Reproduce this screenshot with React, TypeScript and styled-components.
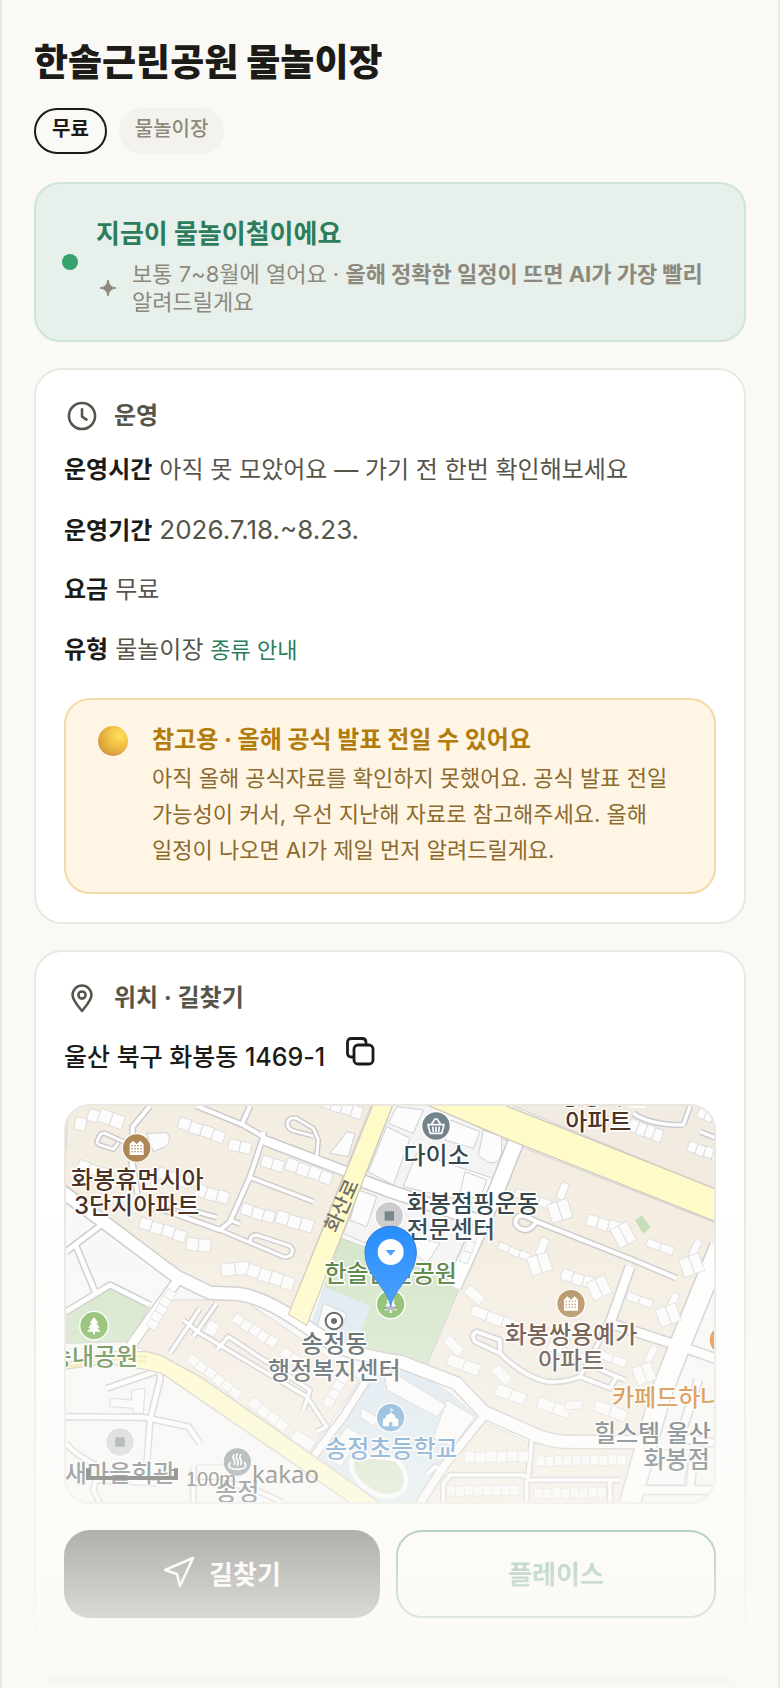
import React from 'react';
import styled, { createGlobalStyle } from 'styled-components';

const GlobalStyle = createGlobalStyle`
  *, *::before, *::after { box-sizing: border-box; }
  body {
    margin: 0;
    background: #faf9f5;
    color: #1c1b17;
    font-family: Inter, "Noto Sans CJK KR", sans-serif;
    word-break: keep-all;
  }
  h1, h2, p, dl, dd { margin: 0; }
`;

const Screen = styled.main`
  position: relative;
  max-height: 100vh;
  overflow: hidden;
  padding: 38px 32px 0;
  border: solid #e9e8e1;
  border-width: 0 2px;
  background: #faf9f5;
`;

const PageTitle = styled.h1`
  font-size: 37px;
  line-height: 50px;
  font-weight: 800;
`;

const Chips = styled.div`
  display: flex;
  gap: 12px;
  margin: 20px 0 28px;
`;

const Chip = styled.span<{ $outlined?: boolean }>`
  height: 46px;
  padding: 0 ${(p) => (p.$outlined ? 16 : 14)}px;
  border: 2px solid ${(p) => (p.$outlined ? '#1c1b17' : '#f3f2ed')};
  border-radius: 23px;
  background: ${(p) => (p.$outlined ? 'transparent' : '#f3f2ed')};
  color: ${(p) => (p.$outlined ? '#1c1b17' : '#8d897c')};
  font-size: 20px;
  line-height: 38px;
  font-weight: ${(p) => (p.$outlined ? 700 : 500)};
`;

const SeasonBanner = styled.section`
  display: flex;
  align-items: center;
  gap: 18px;
  padding: 24px 24px 24px 26px;
  border: 2px solid #cfe5d8;
  border-radius: 26px;
  background: #e7f0eb;
`;

const StatusDot = styled.span`
  flex: none;
  width: 16px;
  height: 16px;
  border-radius: 50%;
  background: #35a26d;
`;

const BannerTitle = styled.h2`
  padding-top: 8px;
  font-size: 26px;
  line-height: 36px;
  font-weight: 700;
  color: #2c7d5b;
`;

const BannerNote = styled.div`
  display: flex;
  align-items: center;
  gap: 12px;
  margin-top: 8px;
  color: #8d897c;
  font-size: 22px;
  line-height: 28px;

  svg { flex: none; }
`;

const Card = styled.section`
  margin-top: 26px;
  padding: 28px;
  border: 2px solid #e9e8e1;
  border-radius: 28px;
  background: #fff;
`;

const CardHeading = styled.h2`
  display: flex;
  align-items: center;
  gap: 14px;
  height: 36px;
  color: #57544a;
  font-size: 24px;
  line-height: 36px;
  font-weight: 700;
`;

const Facts = styled.dl`
  margin: 6px 0 18px;
  font-size: 24px;
  line-height: 60px;
`;

const Fact = styled.div`
  display: flex;
  align-items: baseline;
  gap: 7px;
  height: 60px;

  dt { font-weight: 700; }
  dd { color: #57544a; }
`;

const Digits = styled.span`
  font-size: 26px;
`;

const KindLink = styled.a`
  color: #2c7d5b;
  font-size: 22px;
  text-decoration: none;
`;

const Notice = styled.aside`
  display: flex;
  gap: 24px;
  padding: 24px 24px 24px 32px;
  border: 2px solid #f0dba6;
  border-radius: 26px;
  background: #fff5e5;
  color: #8b6a2d;
  font-size: 22px;
  line-height: 36px;

  h2 {
    margin-bottom: 4px;
    color: #b27c0c;
    font-size: 24px;
    line-height: 32px;
    font-weight: 700;
  }
`;

const Orb = styled.span`
  flex: none;
  width: 30px;
  height: 30px;
  margin-top: 2px;
  border-radius: 50%;
  background:
    radial-gradient(circle at 50% -30%, transparent 84%, #d8796a 100%),
    radial-gradient(circle at 70% 32%, #ffe15c 0, #f3c247 35%, #d9a23c 70%, #cf9a58 100%);
`;

const Address = styled.div`
  display: flex;
  align-items: center;
  gap: 12px;
  height: 88px;
  padding-bottom: 10px;
  font-size: 25px;
  font-weight: 500;
`;

const CopyButton = styled.button`
  display: flex;
  padding: 0 8px 8px;
  border: 0;
  background: none;
  color: #1c1b17;
`;

const MapFrame = styled.div`
  overflow: hidden;
  border: 2px solid #e9e7e0;
  border-radius: 26px;

  svg { display: block; width: 100%; height: 396px; }
`;

const Actions = styled.div`
  display: flex;
  gap: 16px;
  margin-top: 26px;
`;

const ActionButton = styled.button<{ $primary?: boolean }>`
  flex: 1;
  display: flex;
  align-items: center;
  justify-content: center;
  gap: 14px;
  height: 88px;
  padding: 0 0 4px;
  border: ${(p) => (p.$primary ? '0' : '2px solid #2c7d5b')};
  border-radius: 26px;
  background: ${(p) => (p.$primary ? '#1c1b17' : '#fff')};
  color: ${(p) => (p.$primary ? '#fff' : '#2c7d5b')};
  font-family: inherit;
  font-size: 26px;
  font-weight: 700;
`;

const NextCard = styled.div`
  height: 80px;
  margin-top: 28px;
  border-radius: 28px;
  background: #1c1b17;
`;

const BottomFade = styled.div`
  position: absolute;
  left: 0;
  right: 0;
  bottom: 0;
  height: 480px;
  background: linear-gradient(rgba(250, 249, 245, 0), rgba(250, 249, 245, 1));
  pointer-events: none;
`;

/* ---------- map drawing ---------- */

type RoadDef = [d: string, width: number];

const ROADS: RoadDef[] = [
  // trunk road from the west to the east edge
  ['M30 300L160 395L380 560L480 608L565 612Q640 622 740 690L860 770Q960 805 1050 815L1220 880L1300 965L1450 1032Q1490 1050 1540 1055L1800 1057', 36],
  ['M1400 150L1340 300L1210 590', 44],
  ['M640 150L890 245', 26],
  ['M930 270L1010 300L1310 400', 34],
  ['M2010 470L1900 740L1830 920L1740 1240', 60],
  ['M1740 530L1680 700L1880 765L2010 810', 26],
  ['M1300 980L1180 1130L1110 1240', 22],
  ['M950 870L880 980L790 1100', 20],
  ['M380 575L290 700L240 770', 26],
  ['M1860 1040L2000 1060M1770 1200L2000 1200M1930 1100L1920 1200M1945 870L1900 1010', 22],
  // minor streets
  ['M245 250L248 110L300 48M245 200L262 310', 12],
  ['M440 48L580 105L640 140M600 48L575 105M640 140L600 260L540 395L510 420L330 355M640 125V150', 12],
  ['M600 262L790 335M350 340L500 382M540 390L570 402', 10],
  ['M230 160L165 130Q150 128 145 145Q135 160 150 165L190 178L205 158', 8],
  ['M800 200L805 150L790 115L740 85Q715 80 712 100Q712 120 740 125L790 138', 8],
  ['M510 420L700 500Q725 505 728 480L720 468L620 435Q600 435 600 455', 9],
  ['M160 400L48 485M75 460L135 605M48 665L180 585L300 645', 14],
  ['M400 690L450 730L770 920L830 1010L800 1025M500 640L430 740M450 655L360 790M500 780L535 740L780 900L760 960', 10],
  ['M170 895L330 840V870L300 990L290 1130M48 980L280 982L415 1010L450 1060', 14],
  ['M48 1060Q80 1100 150 1130L130 1200L150 1240M130 1170L320 1180M430 1130V1240M430 1180Q560 1160 700 1240', 12],
  ['M1460 395L1750 510L1880 565M1460 395Q1435 430 1410 415Q1390 405 1400 385Q1410 370 1440 385Z', 12],
  ['M1590 860Q1540 880 1490 875Q1420 860 1350 790L1275 755Q1260 735 1280 725L1350 750V785M1590 860L1640 770L1680 680M1590 860L1680 895L1700 860L1610 820M1690 855L1725 870', 11],
  ['M1445 1050L1435 1160M1180 1240V1180L1200 1155H1420L1440 1170H1710M1430 1170V1240M1680 1170V1240M1130 1155L1155 1130L1185 1145', 11],
  ['M1750 70Q1800 105 1900 105M1900 105L1920 48M1950 125L2000 145', 10],
];

type RowDef = [x: number, y: number, angle: number, count: number, w: number, h: number];

const BUILDING_ROWS: RowDef[] = [
  [120, 55, 18, 1, 34, 36], [155, 55, 20, 2, 38, 40], [78, 80, 10, 1, 34, 38],
  [392, 80, 19, 4, 36, 34], [540, 146, 12, 2, 34, 34],
  [640, 195, 17, 2, 34, 34], [715, 203, 19, 4, 36, 36],
  [90, 208, 19, 3, 34, 30], [330, 230, 20, 3, 34, 34], [440, 280, 16, 3, 35, 36],
  [580, 338, 17, 3, 34, 34], [685, 360, 17, 3, 38, 38],
  [275, 380, 18, 4, 36, 34], [412, 442, 6, 2, 36, 38],
  [512, 522, -6, 2, 42, 38], [600, 520, 18, 4, 36, 38],
  [820, 15, 17, 4, 32, 36],
  [380, 610, 120, 5, 26, 30], [480, 690, 28, 1, 34, 40],
  [560, 668, 33, 5, 30, 30], [705, 770, 35, 2, 30, 30],
  [425, 790, 37, 6, 32, 28], [610, 920, 37, 4, 34, 30], [740, 1018, 33, 1, 68, 34],
  [900, 860, 120, 4, 28, 30],
  [1745, 85, 20, 4, 26, 38], [1920, 152, 18, 4, 26, 32], [1950, 50, 20, 3, 24, 32],
  [1400, 295, 20, 3, 38, 26], [1535, 275, 20, 1, 24, 52], [1490, 345, -18, 2, 32, 58],
  [1615, 372, 15, 3, 34, 34], [1680, 420, -28, 2, 28, 64],
  [1350, 455, 22, 3, 34, 22], [1475, 440, 22, 1, 26, 54], [1430, 505, -18, 2, 32, 56],
  [1540, 535, 17, 3, 34, 34], [1608, 580, -25, 2, 30, 58],
  [1795, 445, 20, 2, 42, 24], [1938, 445, 26, 1, 22, 54], [1885, 510, -20, 2, 32, 56],
  [1260, 585, 40, 1, 60, 30], [1270, 645, 20, 3, 50, 32], [1735, 605, 20, 2, 40, 24],
  [1870, 605, 25, 1, 22, 52], [1815, 660, -20, 2, 32, 56],
  [1200, 735, 45, 1, 62, 30], [1200, 792, 20, 2, 50, 34], [1345, 822, 45, 1, 60, 30],
  [1345, 882, 20, 2, 46, 34], [1470, 920, 20, 2, 50, 34], [1545, 935, -3, 1, 50, 24],
  [1640, 930, 20, 2, 50, 34], [1500, 755, 20, 3, 42, 26], [1650, 780, 20, 2, 44, 24],
  [1805, 765, 26, 1, 22, 52], [1745, 835, -20, 2, 30, 56],
  [1243, 1085, -1, 6, 32, 32], [1458, 1098, -1, 10, 27, 30],
  [1190, 1188, -1, 8, 27, 30], [1452, 1195, -1, 8, 27, 30],
  [1300, 395, 110, 4, 34, 26],
];

const Roads = () => (
  <g fill="none" strokeLinejoin="round">
    {ROADS.map(([d, w]) => <path key={`c${d}`} d={d} stroke="#cbcacd" strokeWidth={w + 9} />)}
    {ROADS.map(([d, w]) => <path key={`f${d}`} d={d} stroke="#fff" strokeWidth={w} />)}
  </g>
);

const Buildings = () => (
  <g fill="#fcfcfc" stroke="#d5d4d5" strokeWidth="2">
    {BUILDING_ROWS.map(([x, y, angle, count, w, h]) => (
      <g key={`${x}-${y}`} transform={`translate(${x} ${y}) rotate(${angle})`}>
        {Array.from({ length: count }, (_, i) => (
          <rect key={i} x={i * w} y={count > 2 && i % 2 ? 2 : 0} width={w} height={h} />
        ))}
      </g>
    ))}
  </g>
);

const Badge = ({ x, y, fill, children }: { x: number; y: number; fill: string; children: React.ReactNode }) => (
  <g transform={`translate(${x} ${y})`}>
    <circle r="43" fill={fill} stroke="#fff" strokeWidth="4" />
    {children}
  </g>
);

const ApartmentGlyph = ({ fill }: { fill: string }) => (
  <g>
    <path d="M-21 21V-12L-11 -22L0 -12L11 -22L21 -12V21Z" fill="#fff" />
    {[-14, -5, 4, 13].map((x) => [-9, 0, 9].map((y) => (
      <rect key={`${x}${y}`} x={x - 2} y={y} width="4" height="4" fill={fill} />
    )))}
  </g>
);

const TreeGlyph = () => (
  <path d="M0 -26L13 -8H7L17 7H10L21 18H3V26H-3V18H-21L-10 7H-17L-7 -8H-13Z" fill="#fff" />
);

const Label = styled.text`
  font-family: Inter, "Noto Sans CJK KR", sans-serif;
  font-size: 72px;
  font-weight: 500;
  text-anchor: middle;
  paint-order: stroke;
  stroke: #fff;
  stroke-width: 9px;
  stroke-linejoin: round;
`;

const StartLabel = styled(Label)`
  text-anchor: start;
`;

const RoadLabel = styled(Label)`
  font-size: 60px;
  stroke-width: 0;
`;

const ScaleLabel = styled.text`
  font-family: "Liberation Sans", sans-serif;
  font-size: 60px;
`;

const MapCredit = styled.text`
  font-family: "Noto Sans", sans-serif;
  font-size: 72px;
`;

const DistrictMap = () => (
  <svg viewBox="48 48 1944 1188" preserveAspectRatio="xMidYMid slice" role="img" aria-label="한솔근린공원 주변 지도">
    <rect x="48" y="48" width="1944" height="1188" fill="#f8f8f8" />
    <g stroke="#d2d1d3" strokeWidth="3">
      <path d="M40 40H965L715 675L560 600L475 595L380 540L165 385L40 295Z" fill="#f4ede1" />
      <path d="M340 630H580L700 710L930 870L780 1085L450 860L260 770Z" fill="#f4ece2" />
      <path d="M48 670L165 600L210 595L300 650L235 755L48 760Z" fill="#d3e5c8" />
      <path d="M48 760Q90 720 75 722L48 740M52 90L48 180" fill="none" />
      <path d="M875 445L1225 575L1230 590L1128 832L940 790L780 715Z" fill="#d3e5c8" />
      <path d="M822 590L962 648L912 772L780 710Z" fill="#dde9f2" stroke="none" />
      <path d="M955 870L1030 830L1110 850L1200 910L1275 975L1180 1130L1100 1240H985L805 1100Z" fill="#d9e7f1" />
      <path d="M1400 165L2000 400V480L1880 740L1780 1040L1520 1035L1440 1015L1300 950L1230 860L1128 832L1230 590Z" fill="#f4ede1" />
      <path d="M1370 40H2000V300Z" fill="#f2ebe1" />
      <path d="M1290 990L1440 1060L1780 1075L1740 1240H1110Z" fill="#f4ede1" />
      <path d="M1030 40H1140L1385 160L1220 580L880 430Z" fill="#f4f4f4" />
    </g>
    <g fill="#fcfcfc" stroke="#cfcfd1" strokeWidth="3">
      <path d="M1040 50L1120 60L1090 130L1015 100ZM1010 110L1080 145L1030 285L955 245Z" />
      <path d="M1200 90L1290 125L1270 175L1185 150ZM1300 120L1355 140V190Q1345 230 1310 215L1285 195Z" />
      <path d="M1100 190L1330 265L1295 345L1060 290ZM1245 245L1310 270L1290 330L1230 310Z" />
      <path d="M925 300L980 320L950 410L900 390ZM1090 440L1170 460L1130 520L1080 480Z" />
      <path d="M890 125L915 130L895 200L840 190L865 160Z" />
      <path d="M820 640L890 670L865 750L800 720Z" />
      <path d="M1000 830L1190 945L1160 980L1010 900ZM1190 930L1275 980L1210 1070L1150 1045Z" />
      <path d="M890 1010L940 1040L870 1130L830 1100ZM935 955L990 985L970 1010L930 980Z" />
      <path d="M180 925L245 930V900L285 895L280 970H250V955L180 950Z" />
      <path d="M440 1125H540V1175H440ZM1780 1130L1800 1080H1920L1900 1185H1780Z" />
      <path d="M290 130L350 128Q370 150 345 170L310 185Z" />
    </g>
    <path d="M905 1110Q960 1090 1040 1110Q1085 1160 1060 1200Q1010 1240 950 1195Q900 1160 905 1110Z" fill="#cde1c0" stroke="#fdfdfd" strokeWidth="14" />
    <Roads />
    <Buildings />
    <path d="M1755 390L1775 377L1802 412L1780 431Z" fill="#c4deb4" />
    <g fill="#fffbc9" stroke="#cfcabd" strokeWidth="4">
      <path d="M970 40H1030L770 706L715 673Z" />
      <path d="M1120 40H1350L2010 302V400L1390 155Z" />
      <path d="M40 820L170 785H290L330 795L450 860L780 1090L1000 1245H910L700 1100L335 850L285 838L170 820L40 838Z" />
    </g>
    <path d="M40 822L180 795L290 800M40 832L180 808L290 815" fill="none" stroke="#f6dfa0" strokeWidth="5" />

    <Badge x={260} y={174} fill="#ae8855"><ApartmentGlyph fill="#ae8855" /></Badge>
    <Badge x={1563} y={641} fill="#ae8855"><ApartmentGlyph fill="#ae8855" /></Badge>
    <Badge x={1158} y={108} fill="#74848c">
      <path d="M-24 -4H24L17 22H-17ZM-15 -4L-3 -21H3L15 -4" fill="none" stroke="#fff" strokeWidth="5" strokeLinejoin="round" />
      <path d="M-10 2L-8 18M0 2V18M10 2L8 18" stroke="#fff" strokeWidth="5" />
    </Badge>
    <Badge x={1018} y={378} fill="#cacccf"><rect x="-14" y="-14" width="28" height="28" fill="#74848c" /></Badge>
    <Badge x={210} y={1056} fill="#cacccf"><rect x="-14" y="-14" width="28" height="28" fill="#74848c" /></Badge>
    <Badge x={1022} y={643} fill="#7fb75b"><TreeGlyph /></Badge>
    <Badge x={132} y={707} fill="#7fb75b"><TreeGlyph /></Badge>
    <Badge x={1022} y={983} fill="#5f9cd0">
      <path d="M-23 26V5L-14 0V-6L0 -14V-28L10 -23L2 -19V-14L14 -6V0L23 5V26H5V14H-5V26Z" fill="#fff" />
    </Badge>
    <Badge x={562} y={1116} fill="#74848c">
      <path d="M-22 2Q-34 20 0 22Q34 20 22 2" fill="none" stroke="#fff" strokeWidth="5" strokeLinecap="round" />
      <path d="M-10 -22Q-16 -14 -10 -7Q-5 0 -10 8M0 -24Q-6 -14 0 -7Q5 0 0 10M10 -22Q4 -14 10 -7Q15 0 10 8" fill="none" stroke="#fff" strokeWidth="5" strokeLinecap="round" />
    </Badge>
    <Badge x={2020} y={750} fill="#e08a2c">{null}</Badge>
    <Badge x={2032} y={1070} fill="#74848c">{null}</Badge>
    <g transform="translate(852 693)">
      <circle r="25" fill="#fff" stroke="#3c464d" strokeWidth="6" />
      <circle r="9" fill="#3c464d" />
    </g>

    <RoadLabel fill="#6f6d66" transform="translate(894 356) rotate(-66)">화산로</RoadLabel>
    <Label x="262" y="293" fill="#4b3227">화봉휴먼시아</Label>
    <Label x="260" y="371" fill="#4b3227">3단지아파트</Label>
    <Label x="1658" y="43" fill="#4b3227">쌍용아진</Label>
    <Label x="1645" y="121" fill="#4b3227">아파트</Label>
    <Label x="1160" y="223" fill="#37474f">다이소</Label>
    <StartLabel x="1070" y="365" fill="#37474f">화봉점핑운동</StartLabel>
    <StartLabel x="1070" y="443" fill="#37474f">전문센터</StartLabel>
    <Label x="1022" y="577" fill="#4b7a33">한솔근린공원</Label>
    <Label x="132" y="825" fill="#4b7a33">송내공원</Label>
    <Label x="853" y="787" fill="#37474f">송정동</Label>
    <Label x="853" y="867" fill="#37474f">행정복지센터</Label>
    <Label x="1563" y="760" fill="#4b3227">화봉쌍용예가</Label>
    <Label x="1563" y="838" fill="#4b3227">아파트</Label>
    <StartLabel x="1686" y="949" fill="#c96d0a">카페드하나</StartLabel>
    <Label x="1807" y="1055" fill="#37474f">힐스템 울산</Label>
    <Label x="1880" y="1135" fill="#37474f">화봉점</Label>
    <Label x="1024" y="1102" fill="#3b80c0">송정초등학교</Label>
    <Label x="210" y="1176" fill="#37474f">새마을회관</Label>
    <Label x="562" y="1230" fill="#37474f">송정</Label>

    <path d="M114 1135V1164H378V1135" fill="none" stroke="#1f1f1c" strokeWidth="12" />
    <ScaleLabel x="408" y="1188" fill="#33332f">100m</ScaleLabel>
    <MapCredit x="606" y="1180" fill="#33332f">kakao</MapCredit>

    <ellipse cx="1022" cy="654" rx="20" ry="6" fill="#6b7785" opacity="0.6" />
    <path d="M1022 650C1012 590 945 560 945 486A77 77 0 0 1 1099 486C1099 560 1032 590 1022 650Z" fill="#1f8aff" stroke="#2a72cf" strokeWidth="3" />
    <circle cx="1022" cy="486" r="39" fill="#fff" />
    <path d="M1007 480H1037L1022 497Z" fill="#3d98fa" />
  </svg>
);

/* ---------- page ---------- */

const ClockIcon = () => (
  <svg width="36" height="36" viewBox="0 0 24 24" fill="none" stroke="currentColor" strokeWidth="1.700" strokeLinecap="round" strokeLinejoin="round" aria-hidden>
    <circle cx="12" cy="12" r="8.700" />
    <path d="M12 7.500V12.400L15 14.400" />
  </svg>
);

const PinIcon = () => (
  <svg width="36" height="36" viewBox="0 0 24 24" fill="none" stroke="currentColor" strokeWidth="1.700" strokeLinejoin="round" aria-hidden>
    <path d="M12 20.600C9 17 5.700 13.500 5.700 10A6.300 6.300 0 0 1 18.300 10C18.300 13.500 15 17 12 20.600Z" />
    <circle cx="12" cy="10" r="2.400" />
  </svg>
);

const CopyIcon = () => (
  <svg width="30" height="30" viewBox="0 0 30 30" fill="none" stroke="currentColor" strokeWidth="2.800" strokeLinejoin="round" aria-hidden>
    <rect x="9" y="9" width="19" height="19" rx="4" />
    <path d="M9 21H6.500Q2.500 21 2.500 17V6.500Q2.500 2.500 6.500 2.500H17Q21 2.500 21 6.500V9" />
  </svg>
);

const SendIcon = () => (
  <svg width="32" height="32" viewBox="0 0 32 32" fill="none" stroke="currentColor" strokeWidth="2.600" strokeLinejoin="round" aria-hidden>
    <path d="M30 2L17 30L14 18L2 14Z" />
  </svg>
);

const SparkIcon = () => (
  <svg width="24" height="24" viewBox="0 0 24 24" fill="currentColor" aria-hidden>
    <path d="M12 4Q12.800 11.200 20 12Q12.800 12.800 12 20Q11.200 12.800 4 12Q11.200 11.200 12 4Z" stroke="currentColor" strokeWidth="1" />
  </svg>
);

export default function App() {
  return (
    <Screen>
      <GlobalStyle />
      <PageTitle>한솔근린공원 물놀이장</PageTitle>
      <Chips>
        <Chip $outlined>무료</Chip>
        <Chip>물놀이장</Chip>
      </Chips>

      <SeasonBanner>
        <StatusDot />
        <div>
          <BannerTitle>지금이 물놀이철이에요</BannerTitle>
          <BannerNote>
            <SparkIcon />
            <p>보통 7~8월에 열어요 · <b>올해 정확한 일정이 뜨면 AI가 가장 빨리</b> 알려드릴게요</p>
          </BannerNote>
        </div>
      </SeasonBanner>

      <Card>
        <CardHeading><ClockIcon />운영</CardHeading>
        <Facts>
          <Fact><dt>운영시간</dt><dd>아직 못 모았어요 — 가기 전 한번 확인해보세요</dd></Fact>
          <Fact><dt>운영기간</dt><dd><Digits>2026.7.18.~8.23.</Digits></dd></Fact>
          <Fact><dt>요금</dt><dd>무료</dd></Fact>
          <Fact><dt>유형</dt><dd>물놀이장 <KindLink href="#kinds">종류 안내</KindLink></dd></Fact>
        </Facts>
        <Notice>
          <Orb />
          <div>
            <h2>참고용 · 올해 공식 발표 전일 수 있어요</h2>
            <p>아직 올해 공식자료를 확인하지 못했어요. 공식 발표 전일 가능성이 커서, 우선 지난해 자료로 참고해주세요. 올해 일정이 나오면 AI가 제일 먼저 알려드릴게요.</p>
          </div>
        </Notice>
      </Card>

      <Card>
        <CardHeading><PinIcon />위치 · 길찾기</CardHeading>
        <Address>
          <span>울산 북구 화봉동 1469-1</span>
          <CopyButton type="button" aria-label="주소 복사"><CopyIcon /></CopyButton>
        </Address>
        <MapFrame><DistrictMap /></MapFrame>
        <Actions>
          <ActionButton type="button" $primary><SendIcon />길찾기</ActionButton>
          <ActionButton type="button">플레이스</ActionButton>
        </Actions>
      </Card>

      <NextCard />
      <BottomFade />
    </Screen>
  );
}
